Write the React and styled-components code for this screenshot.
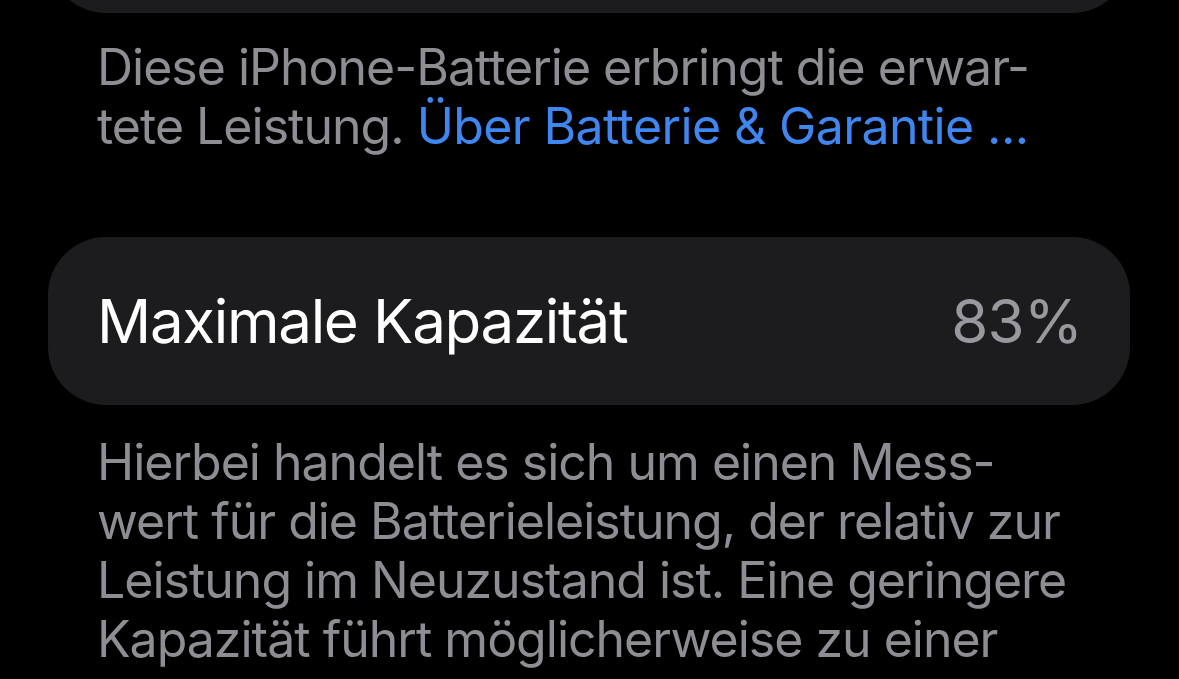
import React from "react";
import styled, { createGlobalStyle } from "styled-components";

const GlobalStyle = createGlobalStyle`
  html, body {
    margin: 0;
    background: #000;
  }
  body {
    font-family: Inter, "Noto Sans", "Liberation Sans", sans-serif;
    -webkit-font-smoothing: antialiased;
  }
`;

const Screen = styled.div`
  height: 679px;
  overflow: hidden;
  background: #000;
  padding: 0 49px 0 48px;
`;

const Card = styled.div`
  background: #1c1c1e;
  border-radius: 58px;
  height: 168px;
  padding: 0 48px 0 49px;
  display: flex;
  align-items: center;
  justify-content: space-between;
  margin-top: ${({ $offset }) => $offset || 0}px;
`;

const Label = styled.span`
  color: #fff;
  font-size: 60px;
  letter-spacing: -1.3px;
`;

const Value = styled.span`
  color: #98989f;
  font-size: 60px;
  letter-spacing: -0.8px;
`;

const Footer = styled.p`
  margin: 0;
  padding: ${({ $top }) => $top}px 49px 0;
  color: #8d8d93;
  font-size: 50px;
  line-height: 59px;
  letter-spacing: -1px;
  white-space: nowrap;
`;

const Link = styled.span`
  color: #3f86f0;
  letter-spacing: -0.6px;
`;

const Section = styled.section`
  margin-top: ${({ $gap }) => $gap}px;
`;

export default function App() {
  return (
    <>
      <GlobalStyle />
      <Screen>
        <Section $gap={0}>
          {/* group above, scrolled mostly out of view */}
          <Card $offset={-155} />
          <Footer $top={25}>
            Diese iPhone-Batterie erbringt die erwar-
            <br />
            tete Leistung. <Link>Über Batterie &amp; Garantie ...</Link>
          </Footer>
        </Section>
        <Section $gap={81}>
          <Card>
            <Label>Maximale Kapazität</Label>
            <Value>83%</Value>
          </Card>
          <Footer $top={28}>
            Hierbei handelt es sich um einen Mess-
            <br />
            wert für die Batterieleistung, der relativ zur
            <br />
            Leistung im Neuzustand ist. Eine geringere
            <br />
            Kapazität führt möglicherweise zu einer
          </Footer>
        </Section>
      </Screen>
    </>
  );
}
